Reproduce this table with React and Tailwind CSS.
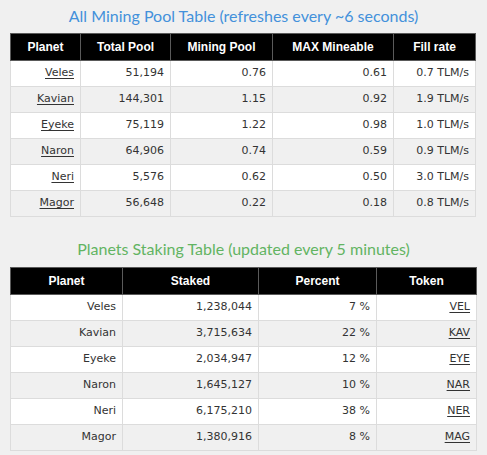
import React from "react";

const pool = [
  ["Veles", "51,194", "0.76", "0.61", "0.7 TLM/s"],
  ["Kavian", "144,301", "1.15", "0.92", "1.9 TLM/s"],
  ["Eyeke", "75,119", "1.22", "0.98", "1.0 TLM/s"],
  ["Naron", "64,906", "0.74", "0.59", "0.9 TLM/s"],
  ["Neri", "5,576", "0.62", "0.50", "3.0 TLM/s"],
  ["Magor", "56,648", "0.22", "0.18", "0.8 TLM/s"],
];

const stake = [
  ["Veles", "1,238,044", "7 %", "VEL"],
  ["Kavian", "3,715,634", "22 %", "KAV"],
  ["Eyeke", "2,034,947", "12 %", "EYE"],
  ["Naron", "1,645,127", "10 %", "NAR"],
  ["Neri", "6,175,210", "38 %", "NER"],
  ["Magor", "1,380,916", "8 %", "MAG"],
];

const th = "h-[27px] bg-black text-white font-bold text-[12px] text-center border border-[#5a5a5a] p-0";
const td = "h-[26px] border border-[#dcdcdc] text-right pr-[6px] py-0 text-[11px]";

export default function App() {
  return (
    <div className="w-[487px] h-[455px] bg-[#f0f0f0] text-[#333] overflow-hidden" style={{ fontFamily: "'DejaVu Sans', sans-serif" }}>
      <h1 className="h-[33px] pt-[4px] text-center text-[16px] leading-[24px] text-[#4391db]" style={{ fontFamily: "Lato, sans-serif" }}>
        All Mining Pool Table (refreshes every ~6 seconds)
      </h1>
      <table className="ml-[10px] w-[465px] border-collapse table-fixed">
        <colgroup>
          <col className="w-[70px]" />
          <col className="w-[90px]" />
          <col className="w-[102px]" />
          <col className="w-[121px]" />
          <col className="w-[82px]" />
        </colgroup>
        <thead>
          <tr>
            {["Planet", "Total Pool", "Mining Pool", "MAX Mineable", "Fill rate"].map((h) => (
              <th key={h} className={th} style={{ fontFamily: "'Liberation Sans', sans-serif" }}>{h}</th>
            ))}
          </tr>
        </thead>
        <tbody>
          {pool.map((r, i) => (
            <tr key={r[0]} className={i % 2 ? "bg-[#f0f0f0]" : "bg-white"}>
              <td className={td}><span className="underline underline-offset-2">{r[0]}</span></td>
              <td className={td}>{r[1]}</td>
              <td className={td}>{r[2]}</td>
              <td className={td}>{r[3]}</td>
              <td className={td}>{r[4]}</td>
            </tr>
          ))}
        </tbody>
      </table>
      <h2 className="mt-[19px] h-[31px] pt-[1px] text-center text-[16px] leading-[24px] text-[#62b462]" style={{ fontFamily: "Lato, sans-serif" }}>
        Planets Staking Table (updated every 5 minutes)
      </h2>
      <table className="ml-[10px] w-[466px] border-collapse table-fixed">
        <colgroup>
          <col className="w-[112px]" />
          <col className="w-[136px]" />
          <col className="w-[118px]" />
          <col className="w-[100px]" />
        </colgroup>
        <thead>
          <tr>
            {["Planet", "Staked", "Percent", "Token"].map((h) => (
              <th key={h} className={th} style={{ fontFamily: "'Liberation Sans', sans-serif" }}>{h}</th>
            ))}
          </tr>
        </thead>
        <tbody>
          {stake.map((r, i) => (
            <tr key={r[0]} className={i % 2 ? "bg-[#f0f0f0]" : "bg-white"}>
              <td className={td}>{r[0]}</td>
              <td className={td}>{r[1]}</td>
              <td className={td}>{r[2]}</td>
              <td className={td}><span className="underline underline-offset-2">{r[3]}</span></td>
            </tr>
          ))}
        </tbody>
      </table>
    </div>
  );
}
